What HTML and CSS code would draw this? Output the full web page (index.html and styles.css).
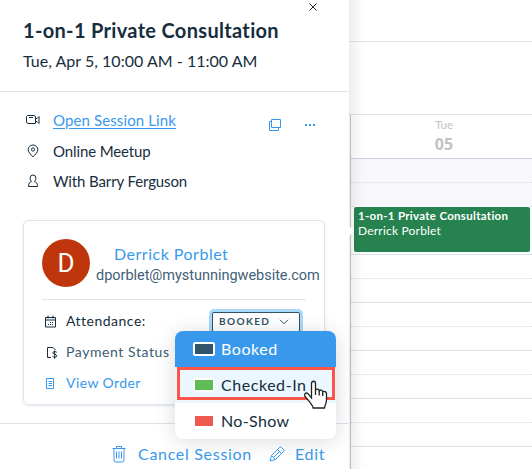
FILE: index.html
```html
<!DOCTYPE html>
<html lang="en">
<head>
<meta charset="utf-8">
<title>Session details</title>
<link rel="stylesheet" href="styles.css">
</head>
<body>
<div class="app">
  <aside class="panel">
    <header class="panel-header">
      <svg class="close" width="10" height="10" viewBox="0 0 10 10"><path d="M1.500 1.500l7 7M8.500 1.500l-7 7"/></svg>
      <h1><span class="title">1-on-1 Private Consultation</span></h1>
      <p><span class="date">Tue, Apr 5, 10:00 AM - 11:00 AM</span></p>
    </header>
    <section class="details">
      <div class="row">
        <svg class="icon" width="14" height="14" viewBox="0 0 14 14"><path d="M1.500 2.500h6.500l1.500 1v7H2l-1.500-1V3.500zM3 4.500h4M9.500 5.500h1.500l2-2v7l-2-2H9.500"/></svg>
        <a class="session-link">Open Session Link</a>
        <svg class="copy" width="12" height="12" viewBox="0 0 12 12"><path d="M2.500.5h9v8h-9zM2.500 2.500h-2v9h9v-3"/></svg>
        <span class="dots"><i></i><i></i><i></i></span>
      </div>
      <div class="row">
        <svg class="icon" width="14" height="14" viewBox="0 0 14 14"><path d="M7 12.800C4.500 10.500 2.200 8 2.200 5.500a4.800 4.500 0 0 1 9.600 0C11.800 8 9.500 10.500 7 12.800z"/><circle cx="7" cy="5.500" r="1.600"/></svg>
        <span class="place">Online Meetup</span>
      </div>
      <div class="row">
        <svg class="icon" width="14" height="14" viewBox="0 0 14 14"><path d="M5.500 7.500C4.500 6.500 4.100 5.300 4.100 4a2.900 3 0 0 1 5.800 0c0 1.300-.4 2.500-1.400 3.500 2 .7 3 1.700 3 5h-9c0-3.300 1-4.300 3-5z"/></svg>
        <span class="staff">With Barry Ferguson</span>
      </div>
    </section>
    <section class="card">
      <div class="client">
        <div class="avatar">D</div>
        <div class="client-text">
          <div class="name"><span>Derrick Porblet</span></div>
          <div class="email"><span>dporblet@mystunningwebsite.com</span></div>
        </div>
      </div>
      <div class="card-row">
        <svg class="card-icon" width="13" height="13" viewBox="0 0 13 13"><path d="M1.500 2.500h10v9.500h-10zM1.500 5h10M4 .5v3M9 .5v3"/><path class="grid-dots" d="M6 7.500h4M4 9.500h5"/></svg>
        <span class="attendance">Attendance:</span>
        <div class="select"><span>BOOKED</span><svg width="10" height="6" viewBox="0 0 10 6"><path d="M1 .8l4 4 4-4"/></svg></div>
        <div class="menu">
          <div class="option selected"><i class="swatch navy"></i><span class="o-booked">Booked</span></div>
          <div class="option hover"><i class="swatch green"></i><span class="o-checked">Checked-In</span></div>
          <div class="option"><i class="swatch red"></i><span class="o-none">No-Show</span></div>
          <div class="focus-frame"></div>
          <svg class="cursor" width="26" height="30" viewBox="0 0 26 30"><path d="M8.500 18V3.500c0-3 4-3 4 0V10c.6-1.300 3.200-1.200 3.700.6.800-1 3-.7 3.500 1 1.500-.8 3.800.1 3.800 2.200v5.700c0 4-1.500 5-2 8.500H10.200c-.5-2.500-2.200-3.500-3.700-6.500L2 16.500c-1.500-2.500 1-4.500 3-2.800z"/><path d="M12.500 10v5M16.200 11v4.500M19.700 12v4"/></svg>
        </div>
      </div>
      <div class="card-row">
        <svg class="card-icon bill" width="13" height="13" viewBox="0 0 13 13"><path d="M5 11.500H1.500V1.500h5.500l2.500 2.500M10.800 6.300c-.8-1-4-1.200-4 .6s4 1 4 2.900-3.400 1.700-4.300.5M8.700 4.500v8.300"/></svg>
        <span class="payment">Payment Status</span>
      </div>
      <div class="card-row">
        <svg class="card-icon blue" width="13" height="13" viewBox="0 0 13 13"><path d="M2.500 1.500h7v10h-7zM4.500 4.500h3.500M4.500 6.500h3.500M4.500 8.500h3.500"/></svg>
        <span class="order">View Order</span>
      </div>
    </section>
    <footer class="actions">
      <svg class="trash" width="14" height="17" viewBox="0 0 14 17"><path d="M.5 2.500h13M4.500 2.500v-2h5v2M2 2.500V14q0 2 2 2h6q2 0 2-2V2.500M4.500 5.500v7M7 5.500v7M9.500 5.500v7"/></svg>
      <span class="cancel">Cancel Session</span>
      <svg class="pencil" width="16" height="16" viewBox="0 0 16 16"><path d="M1 15l1.500-5.500 8-8q1-1 2 0l2 2q1 1 0 2l-8 8zM2.500 9.500l4 4M8.500 3.500l4 4M4.500 11.500l6-6"/></svg>
      <span class="edit">Edit</span>
    </footer>
  </aside>
  <main class="calendar">
    <div class="toolbar"></div>
    <div class="range"></div>
    <div class="day"><span class="weekday">Tue</span><b>05</b></div>
    <div class="slots">
      <div class="slot closed half"></div>
      <div class="slot closed"></div>
      <div class="slot event-slot">
        <div class="event"><b>1-on-1 Private Consultation</b><span>Derrick Porblet</span></div>
      </div>
      <div class="slot half"></div><div class="slot"></div>
      <div class="slot half"></div><div class="slot"></div>
      <div class="slot half"></div><div class="slot"></div>
      <div class="slot half"></div><div class="slot"></div>
    </div>
    <div class="shade"></div>
    <i class="pointer"></i>
  </main>
</div>
</body>
</html>
```
FILE: styles.css
```css
* { box-sizing: border-box; }
body { margin: 0; font-family: Lato, "Liberation Sans", sans-serif; color: #162d3d; background: #fff; }
h1, p { margin: 0; }
svg { fill: none; stroke: #162d3d; flex: none; display: block; }
span, a, b { white-space: nowrap; }
.app { display: grid; grid-template-columns: 349px 1fr; width: 532px; height: 469px; overflow: hidden; }

.panel { display: flex; flex-direction: column; background: #fff; position: relative; z-index: 2; }
.panel-header { height: 92px; border-bottom: 1px solid #dfe3eb; padding: 2px 0 0 23px; }
.close { margin-left: 285px; }
h1 { font-size: 20px; line-height: 24px; margin-top: 6px; font-weight: 700; }
p { font-size: 16px; line-height: 20px; margin-top: 9px; }
.title { letter-spacing: .32px; }
.date { letter-spacing: .03px; }

.details { height: 128px; padding: 13px 0 0 26px; }
.row { display: flex; align-items: center; height: 30.5px; font-size: 15px; }
.icon { margin-right: 13px; }
.session-link { color: #3899ec; text-decoration: underline; text-underline-offset: 2px; width: 216px; letter-spacing: .12px; padding-bottom: 1px; }
.place, .staff { letter-spacing: -.12px; }
.copy, .dots { position: relative; top: 5px; }
.copy { stroke: #3899ec; }
.dots { display: flex; gap: 2px; margin-left: 24px; }
.dots i { width: 2px; height: 2px; background: #3899ec; }

.card { margin-left: 23px; width: 302px; height: 185px; border: 1px solid #dfe5eb; border-radius: 6px; padding: 18px 18px 0; box-shadow: 0 1px 3px #2b568522; }
.client { display: flex; height: 61px; border-bottom: 1px solid #dfe3eb; }
.avatar { flex: none; width: 48px; height: 48px; border-radius: 50%; background: #bf360c; color: #fff; font: 26px/48px Roboto, sans-serif; text-align: center; }
.client-text { width: 216px; }
.name { margin: 4px 0 0 24px; color: #3899ec; font-size: 16px; line-height: 22px; letter-spacing: .5px; }
.email { margin-left: 6px; color: #426178; font: 14.500px/22px Roboto, sans-serif; letter-spacing: -.03px; }
.card-row { position: relative; display: flex; align-items: center; height: 31px; font-size: 14px; }
.client + .card-row { margin-top: 6px; }
.card-icon { margin: 0 9px 0 2px; }
.grid-dots { stroke-dasharray: 1 1; }
.bill { margin: 0 7px 0 4px; }
.blue { stroke: #3899ec; }
.attendance, .payment, .order { padding-bottom: 2px; }
.attendance { letter-spacing: .5px; }
.payment { color: #3b5b72; letter-spacing: .58px; }
.order { color: #3899ec; letter-spacing: .42px; }
.select { position: absolute; left: 170px; top: 6px; width: 88px; height: 20px; border: 1px solid #32536a; border-radius: 2px; box-shadow: 0 0 0 3px #a8d8fa; background: #fff; display: flex; align-items: center; padding: 0 0 2px 6px; color: #32536a; font-size: 10px; font-weight: 700; letter-spacing: 1.4px; }
.select svg { margin: 1px 0 0 9px; stroke: #32536a; }
.menu { position: absolute; z-index: 3; left: 133px; top: 25px; width: 161px; height: 108px; background: #fff; border-radius: 8px; box-shadow: 0 2px 20px #00000026; font-size: 16px; }
.option { display: flex; align-items: center; height: 36px; padding-left: 18px; }
.option span { padding-bottom: 1px; letter-spacing: .55px; }
.option .o-none { letter-spacing: .35px; }
.selected { background: #3899ec; color: #fff; border-radius: 8px 8px 0 0; }
.hover { background: #eaf7ff; }
.swatch { width: 22px; height: 14px; border: 2px solid #fff; border-radius: 2px; margin-right: 6px; }
.navy { background: #32536a; }
.green { background: #60bc57; }
.red { background: #ee5951; }
.focus-frame { position: absolute; left: 2px; top: 36px; width: 158px; height: 33px; border: 3px solid #ff5548; }
.cursor { position: absolute; left: 128px; top: 49px; fill: #fff; stroke: #222; stroke-width: 1.3; }

.actions { margin-top: 18px; height: 46px; border-top: 1px solid #dfe3eb; display: flex; align-items: center; padding: 15px 0 0 112px; color: #3899ec; font-size: 16px; }
.actions svg { stroke: #3899ec; }
.actions span { padding-bottom: 2px; letter-spacing: .7px; }
.trash { margin-right: 12px; }
.cancel { width: 131px; }
.edit { margin-left: 10px; }

.calendar { position: relative; background: #fff; }
.toolbar { height: 42px; border-bottom: 1px solid #dfe3eb; }
.range { height: 73px; border-bottom: 1px solid #dbe4ee; }
.day { height: 44px; border-left: 1px solid #bfcad9; border-bottom: 1px solid #cbd5e2; margin-left: 1px; display: flex; flex-direction: column; align-items: center; color: #bfc3c8; padding: 2px 0 0 5px; }
.weekday { font-size: 11.500px; line-height: 16px; }
.day b { font: 700 16px/22px "Open Sans", sans-serif; }
.slots { margin-left: 1px; border-left: 1px solid #bfcad9; height: 310px; }
.slot { height: 24px; border-bottom: 1px solid #d9e2eb; }
.half { border-bottom: 1px dotted #d9dbdf; }
.closed { background: #f8f8fb; }
.event-slot { height: 48px; padding: 0 2px 0 3px; }
.event { height: 45px; background: #268350; color: #fff; border-radius: 2px; padding: 1px 0 0 4px; font-size: 12px; line-height: 15px; display: flex; flex-direction: column; box-shadow: 0 0 0 1px #fff; }
.event b { font-size: 11.500px; letter-spacing: .3px; }
.event span { letter-spacing: .2px; }
.shade { position: absolute; left: 0; top: 0; bottom: 0; width: 20px; background: linear-gradient(90deg, #00000012, #00000003 60%, #0000); }
.pointer { position: absolute; left: 0; top: 226px; width: 0; height: 0; border: 5px solid transparent; border-left: 5px solid #fff; }
```
